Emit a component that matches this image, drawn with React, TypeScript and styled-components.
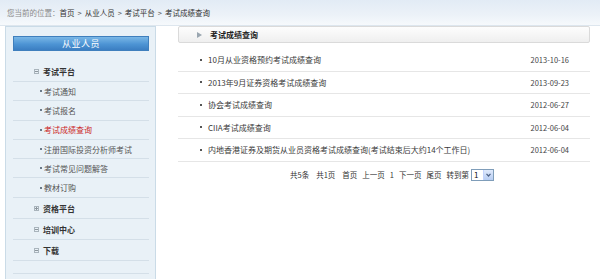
import React from "react";
import styled, { createGlobalStyle } from "styled-components";

const GlobalStyle = createGlobalStyle`
  html, body {
    margin: 0;
    padding: 0;
    background: #ffffff;
  }
  body {
    font-family: "Noto Sans CJK SC", "Noto Sans", sans-serif;
    color: #333;
  }
`;

const Page = styled.div`
  width: 600px;
  height: 279px;
  overflow: hidden;
  background: #fff;
`;

const TopBar = styled.div`
  height: 26px;
  box-sizing: border-box;
  padding-left: 7px;
  display: flex;
  align-items: center;
  font-size: 7.5px;
  background: linear-gradient(#e2ebf5 0%, #ecf2f8 60%, #f6f9fc 100%);
  border-bottom: 1px solid #dde6ee;
`;

const CrumbLabel = styled.span`
  color: #8a8a8a;
`;

const Crumb = styled.span`
  color: #333;
`;

const CrumbSep = styled.span`
  color: #555;
  margin: 0 3px;
`;

const Body = styled.div`
  display: flex;
  align-items: flex-start;
`;

const Sidebar = styled.aside`
  margin-left: 5px;
  width: 151px;
  height: 260px;
  box-sizing: border-box;
  border: 1px solid #cadbe7;
  background: #e9f1f7;
  padding: 9px 6px 0 7px;
`;

const SideTitle = styled.div`
  height: 15px;
  box-sizing: border-box;
  border: 1px solid #3f7fbd;
  background: linear-gradient(#7ab7e6 0%, #4d94d4 55%, #3b7ec2 100%);
  color: #fff;
  font-size: 9px;
  display: flex;
  align-items: center;
  justify-content: center;
  letter-spacing: 0.5px;
`;

const Menu = styled.ul`
  list-style: none;
  margin: 10px 0 0;
  padding: 0;
`;

const MenuRow = styled.li<{ $h: number; $sub?: boolean; $active?: boolean }>`
  height: ${(p) => p.$h}px;
  box-sizing: border-box;
  border-bottom: 1px solid #d4dfe8;
  display: flex;
  align-items: center;
  padding-left: ${(p) => (p.$sub ? 27 : 21)}px;
  font-size: 8px;
  font-weight: ${(p) => (p.$sub ? 400 : 700)};
  color: ${(p) => (p.$active ? "#cc1f1f" : p.$sub ? "#555" : "#333")};
`;

const ToggleBox = styled.span`
  width: 5px;
  height: 5px;
  box-sizing: border-box;
  border: 1px solid #a9b4bc;
  margin-right: 4px;
  position: relative;
  display: inline-block;
  &::before {
    content: "";
    position: absolute;
    left: 0;
    top: 1px;
    width: 3px;
    height: 1px;
    background: #8d979e;
  }
`;

const PlusBox = styled(ToggleBox)`
  &::after {
    content: "";
    position: absolute;
    left: 1px;
    top: 0;
    width: 1px;
    height: 3px;
    background: #8d979e;
  }
`;

const Dot = styled.span`
  width: 2px;
  height: 2px;
  background: #6b7a88;
  margin-right: 2px;
  display: inline-block;
`;

const Main = styled.main`
  margin-left: 22px;
  width: 412px;
`;

const MainHead = styled.div`
  height: 17px;
  box-sizing: border-box;
  border: 1px solid #dadada;
  border-radius: 2px;
  background: linear-gradient(#fdfdfd, #efefef);
  display: flex;
  align-items: center;
  padding-left: 18px;
  font-size: 8px;
  font-weight: 700;
  color: #222;
`;

const Arrow = styled.span`
  width: 0;
  height: 0;
  border-top: 3.5px solid transparent;
  border-bottom: 3.5px solid transparent;
  border-left: 5px solid #9aa6b0;
  margin-right: 8px;
`;

const List = styled.ul`
  list-style: none;
  margin: 6px 0 0;
  padding: 0;
`;

const Row = styled.li`
  height: 22.5px;
  box-sizing: border-box;
  border-bottom: 1px solid #e6e6e6;
  display: flex;
  align-items: center;
  padding: 0 21px 0 22px;
  font-size: 8px;
  color: #3a3a3a;
`;

const RowDot = styled.span`
  width: 2px;
  height: 2px;
  background: #555;
  margin-right: 6px;
`;

const RowTitle = styled.span`
  flex: 1;
`;

const RowDate = styled.span`
  font-size: 7.5px;
  color: #444;
`;

const Pager = styled.div`
  margin-top: 7px;
  padding-left: 16px;
  display: flex;
  align-items: center;
  justify-content: center;
  gap: 5px;
  font-size: 7.5px;
  color: #333;
`;

const PagerGroup = styled.span<{ $gap?: number }>`
  margin-left: ${(p) => p.$gap ?? 0}px;
`;

const FakeSelect = styled.span`
  display: inline-flex;
  align-items: stretch;
  height: 12px;
  width: 23px;
  box-sizing: border-box;
  border: 1px solid #7f9db9;
  background: #fff;
  margin-left: -3px;
`;

const SelectValue = styled.span`
  flex: 1;
  font-size: 8px;
  line-height: 10px;
  padding-left: 2px;
  color: #111;
`;

const SelectBtn = styled.span`
  width: 9px;
  background: linear-gradient(#dfe9fb, #b7cdf3);
  border-left: 1px solid #c3d3fd;
  display: flex;
  align-items: center;
  justify-content: center;
`;

const menu = [
  { label: "考试平台", level: 0, icon: "minus", h: 21 },
  { label: "考试通知", level: 1, h: 19.3 },
  { label: "考试报名", level: 1, h: 19.3 },
  { label: "考试成绩查询", level: 1, h: 19.3, active: true },
  { label: "注册国际投资分析师考试", level: 1, h: 19.3 },
  { label: "考试常见问题解答", level: 1, h: 19.3 },
  { label: "教材订购", level: 1, h: 19.3 },
  { label: "资格平台", level: 0, icon: "plus", h: 21.5 },
  { label: "培训中心", level: 0, icon: "minus", h: 20.5 },
  { label: "下载", level: 0, icon: "minus", h: 21.5 },
];

const rows = [
  { title: "10月从业资格预约考试成绩查询", date: "2013-10-16" },
  { title: "2013年9月证券资格考试成绩查询", date: "2013-09-23" },
  { title: "协会考试成绩查询", date: "2012-06-27" },
  { title: "CIIA考试成绩查询", date: "2012-06-04" },
  { title: "内地香港证券及期货从业员资格考试成绩查询(考试结束后大约14个工作日)", date: "2012-06-04" },
];

export default function App() {
  return (
    <Page>
      <GlobalStyle />
      <TopBar>
        <CrumbLabel>您当前的位置：</CrumbLabel>
        <Crumb>首页</Crumb>
        <CrumbSep>&gt;</CrumbSep>
        <Crumb>从业人员</Crumb>
        <CrumbSep>&gt;</CrumbSep>
        <Crumb>考试平台</Crumb>
        <CrumbSep>&gt;</CrumbSep>
        <Crumb>考试成绩查询</Crumb>
      </TopBar>
      <Body>
        <Sidebar>
          <SideTitle>从业人员</SideTitle>
          <Menu>
            {menu.map((m) => (
              <MenuRow key={m.label} $h={m.h} $sub={m.level === 1} $active={m.active}>
                {m.level === 1 ? <Dot /> : m.icon === "plus" ? <PlusBox /> : <ToggleBox />}
                {m.label}
              </MenuRow>
            ))}
            <MenuRow $h={13} />
          </Menu>
        </Sidebar>
        <Main>
          <MainHead>
            <Arrow />
            考试成绩查询
          </MainHead>
          <List>
            {rows.map((r) => (
              <Row key={r.title}>
                <RowDot />
                <RowTitle>{r.title}</RowTitle>
                <RowDate>{r.date}</RowDate>
              </Row>
            ))}
          </List>
          <Pager>
            <span>共5条</span>
            <PagerGroup $gap={2}>共1页</PagerGroup>
            <PagerGroup $gap={2}>首页</PagerGroup>
            <span>上一页</span>
            <span>1</span>
            <span>下一页</span>
            <span>尾页</span>
            <span>转到第</span>
            <FakeSelect>
              <SelectValue>1</SelectValue>
              <SelectBtn>
                <svg width="5" height="4" viewBox="0 0 5 4">
                  <path d="M0.5 0.8 L2.5 3 L4.5 0.8" fill="none" stroke="#4d6185" strokeWidth="1.2" />
                </svg>
              </SelectBtn>
            </FakeSelect>
          </Pager>
        </Main>
      </Body>
    </Page>
  );
}
